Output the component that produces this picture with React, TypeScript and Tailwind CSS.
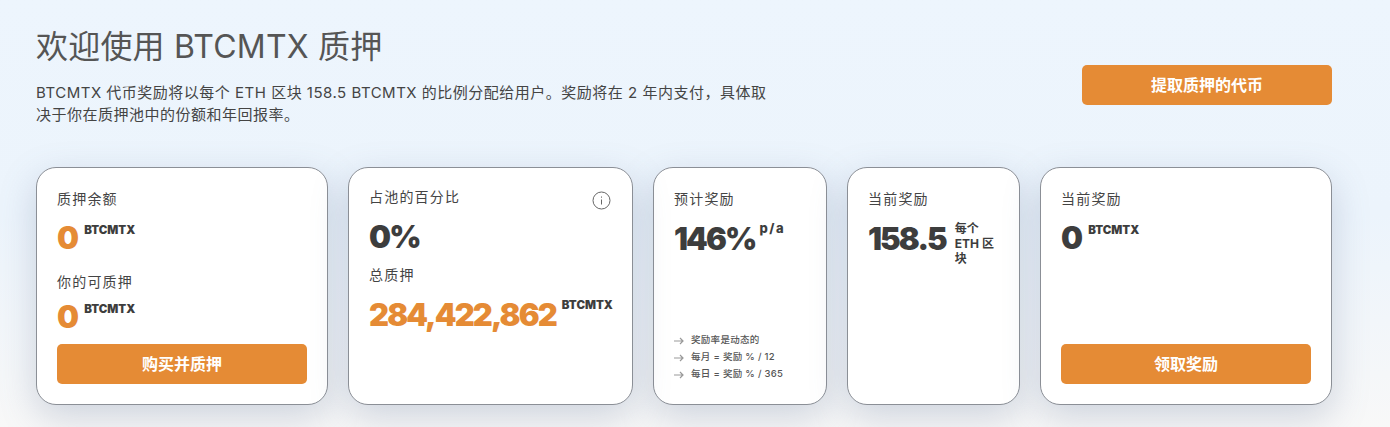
import React from "react";

const FONT = "font-['Inter','Noto_Sans_CJK_SC',sans-serif]";
const NUM = "text-[31px] leading-[40px] font-black tracking-[-1.9px]";

function Label({ children }: { children: React.ReactNode }) {
  return <div className="text-[14px] leading-[20px] tracking-[1.2px] text-[#444444]">{children}</div>;
}

function Unit({ children }: { children: React.ReactNode }) {
  return <span className="block text-[11.5px] leading-[14px] font-black text-[#3d3d3d]">{children}</span>;
}

function OrangeButton({ children }: { children: React.ReactNode }) {
  return (
    <button className="h-10 w-full rounded-[5px] bg-[#e58b35] text-[16px] font-bold text-white">{children}</button>
  );
}

function Value({ value, orange, unit }: { value: string; orange?: boolean; unit: string }) {
  return (
    <div className="flex items-start">
      <span className={`${NUM} ${orange ? "text-[#e58b35]" : "text-[#3d3d3d]"}`}>{value}</span>
      <span className="ml-[7px] mt-[5px]"><Unit>{unit}</Unit></span>
    </div>
  );
}

function Note({ children }: { children: React.ReactNode }) {
  return (
    <div className="flex h-[17px] items-center gap-[7px] text-[9.5px] font-medium tracking-[0.3px] text-[#555555]">
      <svg width="10" height="8" viewBox="0 0 10 8" fill="none" stroke="#999999" strokeWidth="1.2">
        <path d="M0 4h9M6 1l3 3-3 3" />
      </svg>
      <span>{children}</span>
    </div>
  );
}

export default function App() {
  const card = "h-[238px] rounded-[20px] border border-[#8b8f96] bg-white px-5 pt-[21px] pb-5 shadow-[0_12px_36px_rgba(100,120,150,0.28)]";
  return (
    <div className={`${FONT} h-[427px] w-[1390px] overflow-hidden bg-gradient-to-b from-[#edf5fd] via-[#ecf4fc] to-[#f8f8f8] pl-9 pr-[58px] pt-[27px]`}>
      <div className="flex items-start justify-between">
        <div className="w-[740px]">
          <h1 className="text-[32px] leading-[40px] tracking-[0.2px] text-[#555555]">欢迎使用 BTCMTX 质押</h1>
          <p className="mt-[15px] text-[15px] leading-[22px] tracking-[0.5px] text-[#444444]">
            BTCMTX 代币奖励将以每个 ETH 区块 158.5 BTCMTX 的比例分配给用户。奖励将在 2 年内支付，具体取决于你在质押池中的份额和年回报率。
          </p>
        </div>
        <div className="mt-[38px] w-[250px]">
          <OrangeButton>提取质押的代币</OrangeButton>
        </div>
      </div>

      <div className="mt-[41px] flex gap-5">
        <div className={`${card} w-[292px]`}>
          <Label>质押余额</Label>
          <div className="mt-[9px]"><Value value="0" orange unit="BTCMTX" /></div>
          <div className="mt-[14px]"><Label>你的可质押</Label></div>
          <div className="mt-[5px]"><Value value="0" orange unit="BTCMTX" /></div>
          <div className="mt-[7px]"><OrangeButton>购买并质押</OrangeButton></div>
        </div>

        <div className={`${card} relative w-[285px]`}>
          <div className="-mt-[2px]"><Label>占池的百分比</Label></div>
          <svg className="absolute right-[21px] top-[23px]" width="19" height="19" viewBox="0 0 19 19" fill="none" stroke="#666666" strokeWidth="1">
            <circle cx="9.5" cy="9.5" r="8.5" />
            <path d="M9.5 8.5v5M9.5 5.5v1.2" />
          </svg>
          <div className={`mt-[10px] ${NUM} text-[#3d3d3d]`}>0%</div>
          <div className="mt-[8px]"><Label>总质押</Label></div>
          <div className="mt-[10px] flex items-start">
            <span className={`${NUM} text-[#e58b35]`}>284,422,862</span>
            <span className="ml-[6px] mt-[3px]"><Unit>BTCMTX</Unit></span>
          </div>
        </div>

        <div className={`${card} flex w-[174px] flex-col`}>
          <Label>预计奖励</Label>
          <div className="mt-[10px] flex items-start">
            <span className={`${NUM} text-[#3d3d3d]`}>146%</span>
            <span className="ml-[4px] mt-[2px] text-[13px] leading-[14px] font-extrabold tracking-[1.5px] text-[#3d3d3d]">p/a</span>
          </div>
          <div className="mt-auto mb-[1px]">
            <Note>奖励率是动态的</Note>
            <Note>每月 = 奖励 % / 12</Note>
            <Note>每日 = 奖励 % / 365</Note>
          </div>
        </div>

        <div className={`${card} w-[173px]`}>
          <Label>当前奖励</Label>
          <div className="mt-[10px] flex items-start">
            <span className={`${NUM} text-[#3d3d3d]`}>158.5</span>
            <span className="ml-[9px] mt-[2px] w-[48px] text-[12px] leading-[15px] font-bold text-[#3d3d3d]">每个 ETH 区块</span>
          </div>
        </div>

        <div className={`${card} flex w-[292px] flex-col`}>
          <Label>当前奖励</Label>
          <div className="mt-[9px]"><Value value="0" unit="BTCMTX" /></div>
          <div className="mt-auto"><OrangeButton>领取奖励</OrangeButton></div>
        </div>
      </div>
    </div>
  );
}
